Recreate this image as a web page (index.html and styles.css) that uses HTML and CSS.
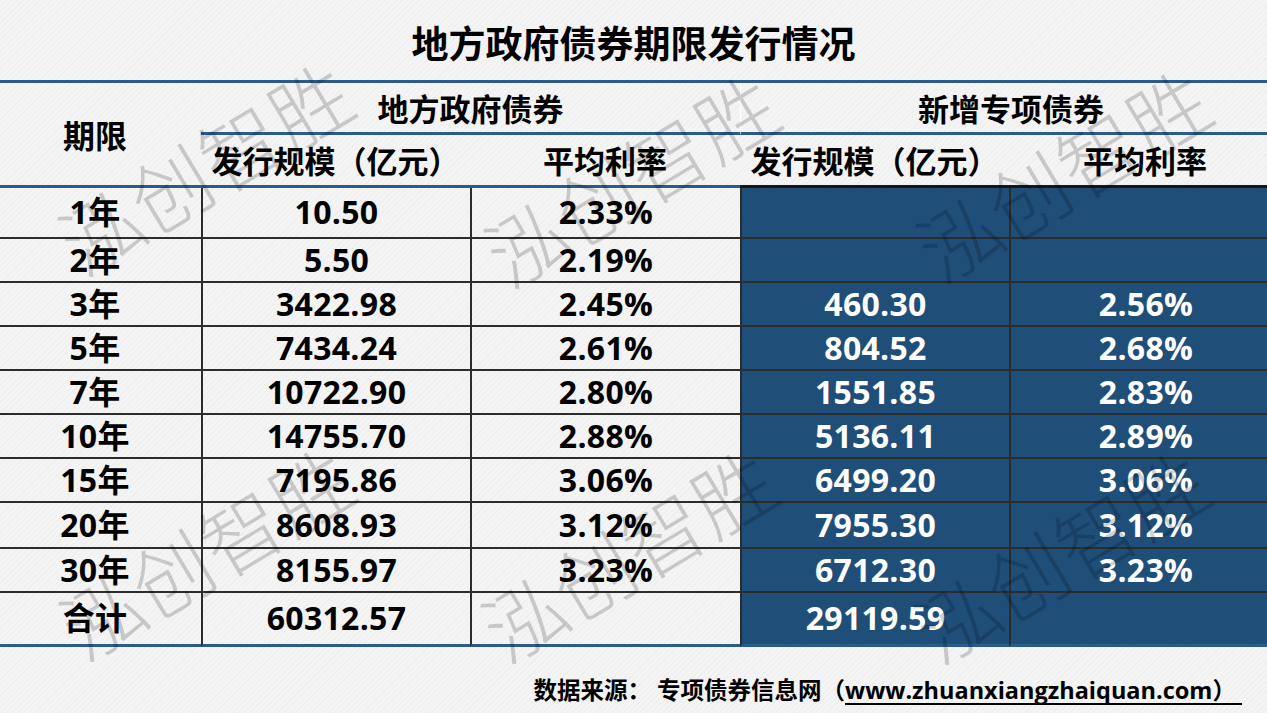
FILE: index.html
```html
<!DOCTYPE html>
<html lang="zh-CN">
<head>
<meta charset="utf-8">
<title>地方政府债券期限发行情况</title>
<link rel="stylesheet" href="styles.css">
</head>
<body>
<div class="slide">
  <h1 class="title">地方政府债券期限发行情况</h1>
  <table class="bonds">
    <colgroup>
      <col class="c-term"><col class="c-amt"><col class="c-rate"><col class="c-amt2"><col class="c-rate2">
    </colgroup>
    <thead>
      <tr class="h1">
        <th rowspan="2" class="term-h">期限</th>
        <th colspan="2" class="grp">地方政府债券</th>
        <th colspan="2" class="grp grp-new">新增专项债券</th>
      </tr>
      <tr class="h2">
        <th class="sub">发行规模（亿元）</th>
        <th class="sub">平均利率</th>
        <th class="sub sub-new">发行规模（亿元）</th>
        <th class="sub sub-new">平均利率</th>
      </tr>
    </thead>
    <tbody>
      <tr class="first"><td class="term">1年</td><td>10.50</td><td>2.33%</td><td class="new"></td><td class="new"></td></tr>
      <tr><td class="term">2年</td><td>5.50</td><td>2.19%</td><td class="new"></td><td class="new"></td></tr>
      <tr><td class="term">3年</td><td>3422.98</td><td>2.45%</td><td class="new">460.30</td><td class="new">2.56%</td></tr>
      <tr><td class="term">5年</td><td>7434.24</td><td>2.61%</td><td class="new">804.52</td><td class="new">2.68%</td></tr>
      <tr><td class="term">7年</td><td>10722.90</td><td>2.80%</td><td class="new">1551.85</td><td class="new">2.83%</td></tr>
      <tr><td class="term">10年</td><td>14755.70</td><td>2.88%</td><td class="new">5136.11</td><td class="new">2.89%</td></tr>
      <tr><td class="term">15年</td><td>7195.86</td><td>3.06%</td><td class="new">6499.20</td><td class="new">3.06%</td></tr>
      <tr class="tall"><td class="term">20年</td><td>8608.93</td><td>3.12%</td><td class="new">7955.30</td><td class="new">3.12%</td></tr>
      <tr><td class="term">30年</td><td>8155.97</td><td>3.23%</td><td class="new">6712.30</td><td class="new">3.23%</td></tr>
      <tr class="total"><td class="term">合计</td><td>60312.57</td><td></td><td class="new">29119.59</td><td class="new"></td></tr>
    </tbody>
  </table>
  <footer class="source">
    <span>数据来源：&nbsp;专项债券信息网（<span class="url">www.zhuanxiangzhaiquan.com）&nbsp;</span></span>
  </footer>
  <div class="watermarks" aria-hidden="true">
    <span class="wm wm-a">泓创智胜</span>
    <span class="wm wm-b">泓创智胜</span>
    <span class="wm wm-c">泓创智胜</span>
    <span class="wm wm-d">泓创智胜</span>
    <span class="wm wm-e">泓创智胜</span>
    <span class="wm wm-f">泓创智胜</span>
  </div>
</div>
</body>
</html>
```
FILE: styles.css
```css
* { box-sizing: border-box; }
html, body { margin: 0; padding: 0; }
body {
  width: 1267px;
  height: 713px;
  overflow: hidden;
  background: #f3f3f3;
  font-family: "Open Sans", "Noto Sans CJK SC", sans-serif;
  font-weight: 700;
  color: #000;
}
.slide {
  position: relative;
  width: 1267px;
  height: 713px;
  overflow: hidden;
  background-color: #f4f4f4;
  background-image: repeating-linear-gradient(135deg, rgba(0,0,0,0.025) 0 1px, transparent 1px 4px);
}
.title {
  margin: 0;
  height: 80px;
  padding-top: 4px;
  display: flex;
  align-items: center;
  justify-content: center;
  font-family: "Noto Sans CJK SC", sans-serif;
  font-size: 37px;
  font-weight: 700;
}
.bonds {
  width: 1281px;
  table-layout: fixed;
  border-collapse: separate;
  border-spacing: 0;
  border-top: 3px solid #2b5b8a;
  font-size: 32px;
}
.c-term { width: 201px; }
.c-amt { width: 269px; }
.c-rate { width: 270px; }
.c-amt2 { width: 269px; }
.c-rate2 { width: 272px; }
.bonds th, .bonds td {
  padding: 0;
  text-align: center;
  vertical-align: middle;
  font-weight: 700;
  line-height: 1.2;
  white-space: nowrap;
}
.bonds th { font-family: "Noto Sans CJK SC", sans-serif; }
.h1 { height: 52px; }
.h2 { height: 53px; }
.term-h {
  font-size: 32px;
  padding-right: 11px !important;
  border-bottom: 3px solid #2b5b8a;
}
.grp {
  font-size: 31px;
  border-bottom: 3px solid #2b5b8a;
}
.grp-new { border-left: 1px solid #ffffff; }
.sub {
  font-size: 31px;
  border-bottom: 3px solid #2b5b8a;
}
.sub-new { border-bottom-color: #161616; }
.bonds tbody tr { height: 44px; }
.bonds tbody tr.first { height: 51px; }
.bonds tbody tr.tall { height: 46px; }
.bonds tbody tr.total { height: 54px; }
.bonds td {
  border-bottom: 2px solid #2c2c2c;
  letter-spacing: 0.3px;
}
.bonds td + td { border-left: 2px solid #2c2c2c; }
.bonds tr.total td { border-bottom: 3px solid #2b5b8a; }
.bonds td.term { padding-right: 11px; }
.bonds td.new {
  background: #1f4e79;
  color: #ffffff;
}
.source {
  display: flex;
  justify-content: flex-end;
  padding: 28px 25px 0 0;
  font-family: "Open Sans", "Noto Sans CJK SC", sans-serif;
  font-size: 23.5px;
  line-height: 30px;
  font-weight: 700;
}
.url {
  text-decoration: underline;
  text-decoration-thickness: 2px;
  text-underline-offset: 4px;
  text-decoration-skip-ink: none;
}
.watermarks {
  position: absolute;
  inset: 0;
  pointer-events: none;
}
.wm {
  position: absolute;
  transform: translate(-50%, -50%) rotate(-31deg);
  font-family: "Noto Sans CJK SC", sans-serif;
  font-weight: 300;
  font-size: 80px;
  letter-spacing: 1px;
  line-height: 1;
  color: rgba(0, 0, 0, 0.18);
  white-space: nowrap;
}
.wm-a { left: 204px; top: 165px; }
.wm-b { left: 630px; top: 177px; }
.wm-c { left: 1062px; top: 172px; }
.wm-d { left: 205px; top: 550px; }
.wm-e { left: 627px; top: 552px; }
.wm-f { left: 1060px; top: 553px; }
```
